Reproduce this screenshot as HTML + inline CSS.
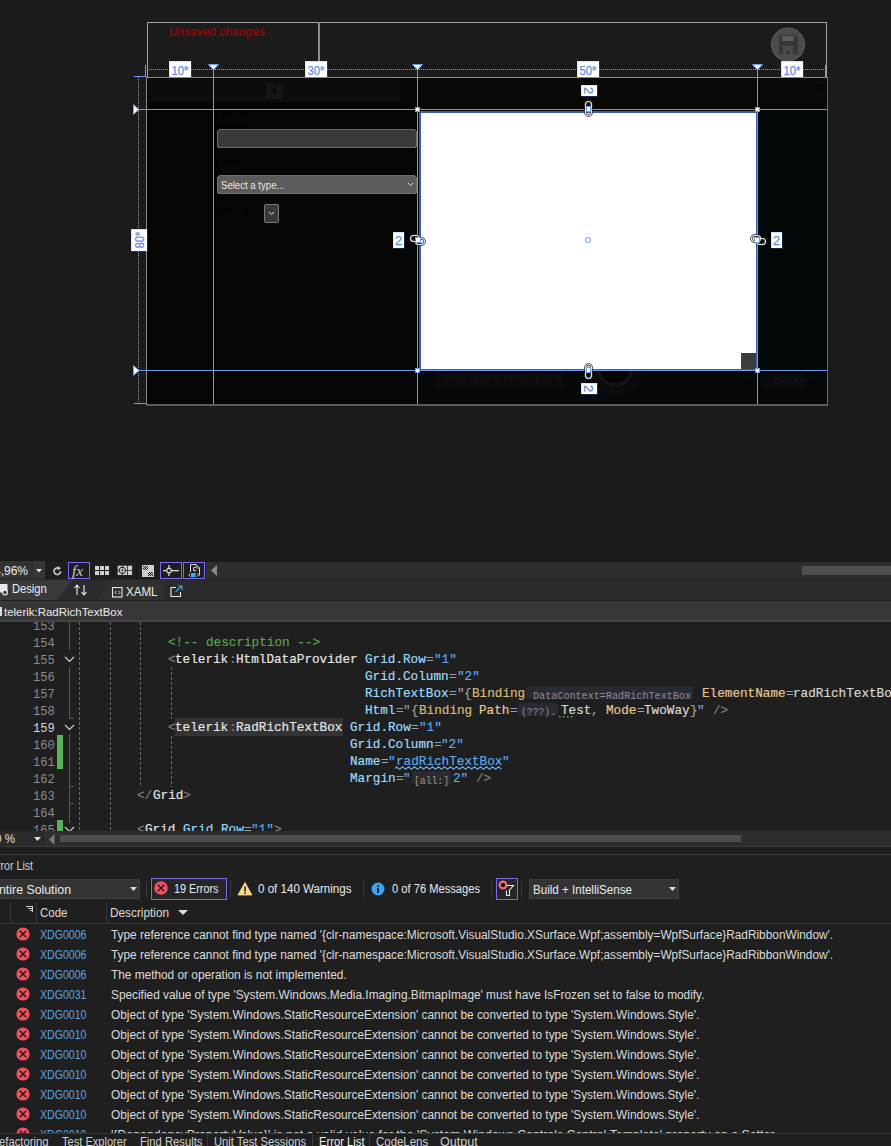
<!DOCTYPE html>
<html><head><meta charset="utf-8">
<style>
*{margin:0;padding:0;box-sizing:border-box}
html,body{width:891px;height:1146px;overflow:hidden;background:#1b1b1b;font-family:"Liberation Sans",sans-serif;position:relative}
.a{position:absolute}
.t{position:absolute;white-space:pre}
</style></head>
<body>
<svg class="a" style="left:0;top:0" width="891" height="420" font-family="Liberation Sans, sans-serif" shape-rendering="crispEdges">
  <defs>
    <radialGradient id="map1" cx="0.5" cy="0.5" r="0.6">
      <stop offset="0" stop-color="#0a0d10"/>
      <stop offset="1" stop-color="#050607"/>
    </radialGradient>
  </defs>
  <!-- header frame -->
  <rect x="147.5" y="22.5" width="679" height="56" fill="#1b1b1b" stroke="#a6a6a6" stroke-width="1"/>
  <rect x="318" y="22" width="2" height="40" fill="#8c8c8c"/>
  <text x="169" y="36" font-size="12" font-weight="bold" font-style="italic" fill="#850b0b" textLength="96" lengthAdjust="spacingAndGlyphs">Unsaved changes</text>
  <circle cx="788" cy="44.5" r="16.5" fill="#4b4b4b" stroke="#606060" stroke-width="1" shape-rendering="auto"/>
  <g fill="#373737">
    <path d="M779 35 h16 l3 3 v16 h-19 z"/>
  </g>
  <rect x="782" y="36" width="12" height="5" fill="#5a5a5a"/>
  <rect x="783" y="46" width="10" height="8" fill="#4b4b4b"/>
  <rect x="786" y="51" width="4" height="3" fill="#373737"/>
  <!-- content -->
  <rect x="146.5" y="77.5" width="681" height="327" fill="#050505" stroke="#8a8a8a" stroke-width="1"/>
  <rect x="827" y="78" width="1" height="327" fill="#6a6a6a"/>
  <rect x="146" y="404" width="682" height="2" fill="#5c5c5c"/>
  <rect x="400" y="78" width="427" height="326" fill="#02070a"/>
  <rect x="400" y="78" width="20" height="326" fill="#040506"/>
  <rect x="418" y="78" width="409" height="31" fill="#090807"/>
  <rect x="418" y="371" width="409" height="33" fill="#05080a"/>
  <rect x="436" y="373" width="128" height="15" rx="2" fill="#080a0c"/>
  <circle cx="615" cy="370" r="27" fill="#090a0b" shape-rendering="auto"/><circle cx="615" cy="368" r="17" fill="#030303" stroke="#111315" stroke-width="4" shape-rendering="auto"/><path d="M612 391 l3 3 l3 -3" fill="none" stroke="#181a1c" stroke-width="1"/>
  <rect x="765" y="373" width="40" height="15" rx="2" fill="#080a0c"/>
  <rect x="812" y="82" width="12" height="12" fill="none" stroke="#0e0e0e"/>
  <!-- app toolbar -->
  <rect x="148" y="79" width="252" height="23" rx="3" fill="#0c0c0c"/>
  <path d="M266 83 h7 l2 2 h8 v14 h-17 z" fill="#151515"/><path d="M271 91 h6 M274 88 v6" stroke="#080808" stroke-width="1.3"/>
  <!-- form labels -->
  <text x="218" y="124" font-size="11" fill="#0b0b0b">Name</text>
  <rect x="217.5" y="129.5" width="199" height="18" rx="3" fill="#3a3a3a" stroke="#6a6a6a"/>
  <text x="218" y="170" font-size="11" fill="#0b0b0b">Type</text>
  <rect x="217.5" y="175.5" width="199" height="18" rx="3" fill="#5b5b5b" stroke="#6f6f6f"/>
  <text x="221" y="189" font-size="10.8" fill="#e8e8e8" textLength="63.5" lengthAdjust="spacingAndGlyphs">Select a type...</text>
  <path d="M408 183 l2.5 2.5 l2.5 -2.5" fill="none" stroke="#ddd" stroke-width="1" shape-rendering="auto"/>
  <text x="218" y="217" font-size="11" fill="#0b0b0b">Color</text>
  <rect x="264.5" y="204.5" width="14" height="18" rx="2" fill="#3a3a3a" stroke="#7a7a7a"/>
  <path d="M269 212 l2.5 2.5 l2.5 -2.5" fill="none" stroke="#ddd" stroke-width="1" shape-rendering="auto"/>
  <!-- map text -->
  <text x="442" y="383" font-size="9" fill="#181818" textLength="120" lengthAdjust="spacingAndGlyphs">30° 00' 00,00" N 75° 00' 00,00" E</text>
  <text x="772" y="383" font-size="9" fill="#1a1a1a">2500 km</text>
  <!-- white rich text box -->
  <rect x="419" y="111" width="339" height="259" fill="#3a5fa8"/>
  <rect x="421" y="113" width="335" height="256" fill="#ffffff"/>
  <rect x="741" y="353" width="15" height="16" fill="#3c3c3c"/>
  <!-- guides -->
  <g fill="#6f9be8">
    <rect x="213" y="66" width="1" height="338"/>
    <rect x="417" y="66" width="1" height="338"/>
    <rect x="757" y="66" width="1" height="338"/>
    <rect x="139" y="109" width="688" height="1"/>
    <rect x="139" y="370" width="688" height="1"/>
  </g>
  <!-- dotted lines -->
  <line x1="147" y1="69.5" x2="826" y2="69.5" stroke="#6f9be8" stroke-width="1" stroke-dasharray="1 1"/>
  <line x1="138.5" y1="77" x2="138.5" y2="403" stroke="#6f9be8" stroke-width="1" stroke-dasharray="1 1"/>
  <!-- corner brackets -->
  <g fill="#6f9be8">
    <rect x="145" y="65" width="1" height="12"/>
    <rect x="134" y="76" width="12" height="1"/>
    <rect x="825" y="65" width="1" height="12"/>
    <rect x="134" y="403" width="12" height="1"/>
  </g>
  <!-- triangles -->
  <g fill="#ffffff" stroke="#6f9be8" stroke-width="1" shape-rendering="auto">
    <path d="M208.5 64.5 h10 l-5 5.5 z"/>
    <path d="M412.5 64.5 h10 l-5 5.5 z"/>
    <path d="M752.5 64.5 h10 l-5 5.5 z"/>
    <path d="M133.5 104.5 v10 l5.5 -5 z"/>
    <path d="M133.5 365.5 v10 l5.5 -5 z"/>
  </g>
  <!-- column labels -->
  <g font-size="13" fill="#5f8de6" stroke="#5f8de6" stroke-width="0.25" text-anchor="middle">
    <rect x="169" y="61" width="22" height="16" fill="#fff"/><text x="180" y="75" textLength="17" lengthAdjust="spacingAndGlyphs">10*</text>
    <rect x="305" y="61" width="22" height="16" fill="#fff"/><text x="316" y="75" textLength="17" lengthAdjust="spacingAndGlyphs">30*</text>
    <rect x="577" y="61" width="22" height="16" fill="#fff"/><text x="588" y="75" textLength="17" lengthAdjust="spacingAndGlyphs">50*</text>
    <rect x="781" y="61" width="22" height="16" fill="#fff"/><text x="792" y="75" textLength="17" lengthAdjust="spacingAndGlyphs">10*</text>
    <rect x="131" y="229" width="16" height="22" fill="#fff"/><text transform="translate(144 240) rotate(-90)" x="0" y="0" textLength="17" lengthAdjust="spacingAndGlyphs">80*</text>
    <rect x="393" y="232" width="11" height="16" fill="#fff"/><text x="398.5" y="245">2</text>
    <rect x="771" y="232" width="11" height="16" fill="#fff"/><text x="776.5" y="245">2</text>
    <rect x="581" y="85" width="16" height="11" fill="#fff"/><text transform="translate(584 90.5) rotate(90)" x="0" y="0">2</text>
    <rect x="581" y="383" width="16" height="11" fill="#fff"/><text transform="translate(584 388.5) rotate(90)" x="0" y="0">2</text>
  </g>
  <!-- handles -->
  <g fill="#ffffff" stroke="#6f9be8" stroke-width="1">
    <rect x="415.5" y="107.5" width="4" height="4"/>
    <rect x="755.5" y="107.5" width="4" height="4"/>
    <rect x="415.5" y="368.5" width="4" height="4"/>
    <rect x="755.5" y="368.5" width="4" height="4"/>
  </g>
  <circle cx="588" cy="240" r="2.5" fill="none" stroke="#6f9be8" stroke-width="1" shape-rendering="auto"/>
  <!-- chain links -->
  <g fill="none" shape-rendering="auto">
    <g stroke="#2a2a2a" stroke-width="2.6">
      <rect x="585.5" y="101.5" width="6" height="8" rx="3"/><rect x="585.5" y="107.5" width="6" height="8" rx="3"/>
      <rect x="585.5" y="364.5" width="6" height="8" rx="3"/><rect x="585.5" y="370.5" width="6" height="8" rx="3"/>
      <rect x="410.5" y="235.5" width="9" height="6" rx="3"/><rect x="415.5" y="238.5" width="9" height="6" rx="3"/>
      <rect x="751.5" y="235.5" width="9" height="6" rx="3"/><rect x="756.5" y="238.5" width="9" height="6" rx="3"/>
    </g>
    <g stroke="#e6e6e6" stroke-width="1.1">
      <rect x="585.5" y="101.5" width="6" height="8" rx="3"/><rect x="585.5" y="107.5" width="6" height="8" rx="3"/>
      <rect x="585.5" y="364.5" width="6" height="8" rx="3"/><rect x="585.5" y="370.5" width="6" height="8" rx="3"/>
      <rect x="410.5" y="235.5" width="9" height="6" rx="3"/><rect x="415.5" y="238.5" width="9" height="6" rx="3"/>
      <rect x="751.5" y="235.5" width="9" height="6" rx="3"/><rect x="756.5" y="238.5" width="9" height="6" rx="3"/>
    </g>
  </g>
  <g fill="#ffffff" stroke="#6f9be8" stroke-width="1">
    <rect x="586.5" y="106.5" width="4" height="5"/>
    <rect x="586.5" y="367.5" width="4" height="5"/>
    <rect x="415.5" y="237.5" width="5" height="5"/>
    <rect x="754.5" y="237.5" width="5" height="5"/>
  </g>
</svg>

<div class="a" style="left:0;top:562px;width:891px;height:17px;background:#2e2e2e"></div><div class="a" style="left:0;top:579px;width:891px;height:1px;background:#262626"></div><div class="a" style="left:0;top:561px;width:45px;height:18px;background:#333333"></div><div class="a" style="left:32px;top:561px;width:1px;height:18px;background:#2c2c2c"></div><div class="a" style="left:33px;top:561px;width:12px;height:18px;background:#363636;border-right:1px solid #3c3c3c"></div><div class="t" style="left:-6.00px;top:565.14px;font-size:12px;line-height:12px;font-family:'Liberation Sans',sans-serif;color:#eeeeee;transform:scaleX(0.9995);transform-origin:0 0;">4,96%</div>
<svg class="a" style="left:36px;top:569px" width="6" height="4"><path d="M0 0h6l-3 3.5z" fill="#e6e6e6"/></svg><div class="a" style="left:45px;top:562px;width:161px;height:17px;background:#1e1e1e"></div><div class="a" style="left:113px;top:563px;width:1px;height:15px;background:#161616"></div><div class="a" style="left:136px;top:563px;width:1px;height:15px;background:#161616"></div><svg class="a" style="left:50px;top:563px" width="14" height="16" viewBox="0 0 14 16">
<path d="M10.6 8.2 A3.3 3.3 0 1 1 8.6 5.2" fill="none" stroke="#c8c8c8" stroke-width="1.7"/>
<path d="M7.6 3 L11 5.3 L7.6 7.6 z" fill="#c8c8c8"/></svg><div class="a" style="left:68px;top:562px;width:22px;height:17px;border:1px solid #7b6cf0;background:#1e1e1e"></div><div class="t" style="left:72px;top:562px;font-family:'Liberation Serif',serif;font-style:italic;font-size:15.5px;line-height:17px;color:#c8c8c8">fx</div><svg class="a" style="left:95px;top:566px" width="15" height="9"><rect x="0" y="0" width="4" height="4" fill="#d0d0d0"/><rect x="5" y="0" width="4" height="4" fill="#d0d0d0"/><rect x="10" y="0" width="4" height="4" fill="#d0d0d0"/><rect x="0" y="5" width="4" height="4" fill="#d0d0d0"/><rect x="5" y="5" width="4" height="4" fill="#d0d0d0"/><rect x="10" y="5" width="4" height="4" fill="#d0d0d0"/></svg><svg class="a" style="left:117px;top:565px" width="16" height="11">
<rect x="0.7" y="0.7" width="4.3" height="4.3" fill="#cfcfcf"/><rect x="5.7" y="0.7" width="4.3" height="4.3" fill="#cfcfcf"/>
<rect x="0.7" y="5.7" width="4.3" height="4.3" fill="#cfcfcf"/><rect x="5.7" y="5.7" width="4.3" height="4.3" fill="#cfcfcf"/>
<rect x="10.8" y="0.7" width="4.3" height="4.3" fill="#cfcfcf"/><rect x="10.8" y="5.7" width="4.3" height="4.3" fill="#cfcfcf"/>
<circle cx="5.35" cy="5.35" r="3.2" fill="none" stroke="#1e1e1e" stroke-width="1"/>
<circle cx="5.35" cy="5.35" r="2" fill="#cfcfcf"/><circle cx="5.35" cy="5.35" r="1" fill="#1e1e1e"/></svg><svg class="a" style="left:142px;top:565px" width="12" height="12"><rect width="12" height="12" fill="#cdcdcd"/><rect x="1" y="1" width="1" height="1" fill="#1a1a1a"/><rect x="1" y="3" width="1" height="1" fill="#1a1a1a"/><rect x="2" y="2" width="1" height="1" fill="#1a1a1a"/><rect x="2" y="4" width="1" height="1" fill="#1a1a1a"/><rect x="6" y="8" width="1" height="1" fill="#1a1a1a"/><rect x="6" y="10" width="1" height="1" fill="#1a1a1a"/><rect x="3" y="1" width="1" height="1" fill="#1a1a1a"/><rect x="3" y="3" width="1" height="1" fill="#1a1a1a"/><rect x="7" y="7" width="1" height="1" fill="#1a1a1a"/><rect x="7" y="9" width="1" height="1" fill="#1a1a1a"/><rect x="4" y="2" width="1" height="1" fill="#1a1a1a"/><rect x="4" y="4" width="1" height="1" fill="#1a1a1a"/><rect x="8" y="8" width="1" height="1" fill="#1a1a1a"/><rect x="8" y="10" width="1" height="1" fill="#1a1a1a"/><rect x="5" y="1" width="1" height="1" fill="#1a1a1a"/><rect x="5" y="3" width="1" height="1" fill="#1a1a1a"/><rect x="9" y="7" width="1" height="1" fill="#1a1a1a"/><rect x="9" y="9" width="1" height="1" fill="#1a1a1a"/><rect x="10" y="8" width="1" height="1" fill="#1a1a1a"/><rect x="10" y="10" width="1" height="1" fill="#1a1a1a"/></svg><div class="a" style="left:160px;top:562px;width:22px;height:17px;border:1px solid #7b6cf0;background:#1e1e1e"></div><svg class="a" style="left:163px;top:565px" width="16" height="11">
<rect x="0" y="5" width="16" height="1.3" fill="#d8d8d8"/><rect x="5.3" y="0" width="1.3" height="11" fill="#d8d8d8"/>
<circle cx="6" cy="5.6" r="2.3" fill="#1e1e1e" stroke="#d8d8d8" stroke-width="1.2"/></svg><div class="a" style="left:183px;top:562px;width:22px;height:17px;border:1px solid #7b6cf0;background:#1e1e1e"></div><svg class="a" style="left:183px;top:562px" width="22" height="17">
<path d="M7.5 10 V2.5 H13 L16.5 6 V13.5" fill="none" stroke="#d8d8d8" stroke-width="1"/>
<path d="M13 2.5 V6 H16.5" fill="none" stroke="#d8d8d8" stroke-width="0.8"/>
<path d="M12.5 5.5 H10.5 V8.5 H12.5 M11.8 7.5 L12.8 8.5 L11.8 9.5" fill="none" stroke="#d8d8d8" stroke-width="0.9"/>
<path d="M7 11.5 L5.8 13 L7 14.5 M14.2 11.5 L15.4 13 L14.2 14.5" fill="none" stroke="#d8d8d8" stroke-width="0.9"/>
<rect x="8" y="11" width="4.5" height="4.3" fill="#3aaef0"/></svg><svg class="a" style="left:211px;top:565px" width="6" height="11"><path d="M6 0v11L0 5.5z" fill="#8a8a8a"/></svg><div class="a" style="left:802px;top:566px;width:89px;height:9px;background:#4f4f4f"></div><div class="a" style="left:0;top:580px;width:891px;height:21px;background:#2b2b2b"></div><svg class="a" style="left:0;top:580px" width="200" height="21"><path d="M0 0H73L55 21H0z" fill="#3a3a3a"/><path d="M112 0H164V21H97z" fill="#313131"/></svg><svg class="a" style="left:0;top:584px" width="9" height="12">
<rect x="-4" y="0.5" width="11" height="7.5" fill="#e8e8e8" stroke="#e8e8e8" stroke-width="1"/>
<circle cx="5" cy="8.5" r="2.4" fill="#3a3a3a" stroke="#e8e8e8" stroke-width="1.2"/></svg><div class="t" style="left:11.50px;top:583.42px;font-size:12.5px;line-height:12.5px;font-family:'Liberation Sans',sans-serif;color:#eeeeee;transform:scaleX(0.8941);transform-origin:0 0;">Design</div>
<svg class="a" style="left:74px;top:584px" width="13" height="12">
<path d="M3 11V1.5 M0.5 4 L3 1 L5.5 4" fill="none" stroke="#f0f0f0" stroke-width="1.1"/>
<path d="M10 1V10.5 M7.5 8 L10 11 L12.5 8" fill="none" stroke="#f0f0f0" stroke-width="1.1"/></svg><svg class="a" style="left:112px;top:587px" width="11" height="11">
<rect x="0.5" y="0.5" width="9.5" height="9.5" fill="none" stroke="#e8e8e8" stroke-width="1.1"/>
<path d="M4.3 4 L3 5.5 L4.3 7 M6.7 4 L8 5.5 L6.7 7" fill="none" stroke="#e8e8e8" stroke-width="0.9"/></svg><div class="t" style="left:126.00px;top:586.42px;font-size:12.5px;line-height:12.5px;font-family:'Liberation Sans',sans-serif;color:#eeeeee;transform:scaleX(0.9223);transform-origin:0 0;">XAML</div>
<svg class="a" style="left:170px;top:585px" width="14" height="13">
<path d="M6 2.5 H1 V11.5 H10.5 V7" fill="none" stroke="#e8e8e8" stroke-width="1.1"/>
<path d="M5.5 7 L11.5 1" fill="none" stroke="#3aa0e8" stroke-width="1.3"/><path d="M8 1 H12 V5" fill="none" stroke="#3aa0e8" stroke-width="1.2"/></svg><div class="a" style="left:0;top:600px;width:891px;height:1px;background:#222222"></div><div class="a" style="left:0;top:601px;width:891px;height:20px;background:#373737"></div><div class="a" style="left:0;top:620px;width:891px;height:2px;background:#444444"></div><div class="a" style="left:0;top:607px;width:2px;height:9px;background:#e0e0e0"></div><div class="t" style="left:4.00px;top:605.68px;font-size:11.6px;line-height:11.6px;font-family:'Liberation Sans',sans-serif;color:#eaeaea;transform:scaleX(0.9876);transform-origin:0 0;">telerik:RadRichTextBox</div>
<div class="a" style="left:0;top:622px;width:891px;height:209px;background:#1f1f1f;overflow:hidden"><div class="t" style="left:33.25px;top:-2.12px;font-size:13.6px;line-height:13.6px;font-family:'Liberation Mono',monospace;color:#8c8c8c;transform:scaleX(0.8950);transform-origin:0 0;">153</div>
<div class="t" style="left:33.25px;top:14.88px;font-size:13.6px;line-height:13.6px;font-family:'Liberation Mono',monospace;color:#8c8c8c;transform:scaleX(0.8950);transform-origin:0 0;">154</div>
<div class="t" style="left:33.25px;top:31.88px;font-size:13.6px;line-height:13.6px;font-family:'Liberation Mono',monospace;color:#8c8c8c;transform:scaleX(0.8950);transform-origin:0 0;">155</div>
<div class="t" style="left:33.25px;top:48.88px;font-size:13.6px;line-height:13.6px;font-family:'Liberation Mono',monospace;color:#8c8c8c;transform:scaleX(0.8950);transform-origin:0 0;">156</div>
<div class="t" style="left:33.25px;top:65.88px;font-size:13.6px;line-height:13.6px;font-family:'Liberation Mono',monospace;color:#8c8c8c;transform:scaleX(0.8950);transform-origin:0 0;">157</div>
<div class="t" style="left:33.25px;top:82.88px;font-size:13.6px;line-height:13.6px;font-family:'Liberation Mono',monospace;color:#8c8c8c;transform:scaleX(0.8950);transform-origin:0 0;">158</div>
<div class="t" style="left:33.25px;top:99.88px;font-size:13.6px;line-height:13.6px;font-family:'Liberation Mono',monospace;color:#d8d8d8;transform:scaleX(0.8950);transform-origin:0 0;">159</div>
<div class="t" style="left:33.25px;top:116.88px;font-size:13.6px;line-height:13.6px;font-family:'Liberation Mono',monospace;color:#8c8c8c;transform:scaleX(0.8950);transform-origin:0 0;">160</div>
<div class="t" style="left:33.25px;top:133.88px;font-size:13.6px;line-height:13.6px;font-family:'Liberation Mono',monospace;color:#8c8c8c;transform:scaleX(0.8950);transform-origin:0 0;">161</div>
<div class="t" style="left:33.25px;top:150.88px;font-size:13.6px;line-height:13.6px;font-family:'Liberation Mono',monospace;color:#8c8c8c;transform:scaleX(0.8950);transform-origin:0 0;">162</div>
<div class="t" style="left:33.25px;top:167.88px;font-size:13.6px;line-height:13.6px;font-family:'Liberation Mono',monospace;color:#8c8c8c;transform:scaleX(0.8950);transform-origin:0 0;">163</div>
<div class="t" style="left:33.25px;top:184.88px;font-size:13.6px;line-height:13.6px;font-family:'Liberation Mono',monospace;color:#8c8c8c;transform:scaleX(0.8950);transform-origin:0 0;">164</div>
<div class="t" style="left:33.25px;top:201.88px;font-size:13.6px;line-height:13.6px;font-family:'Liberation Mono',monospace;color:#8c8c8c;transform:scaleX(0.8950);transform-origin:0 0;">165</div>
<div class="a" style="left:57px;top:113.4px;width:6px;height:34px;background:#57b45a"></div><div class="a" style="left:57px;top:198.4px;width:6px;height:17px;background:#57b45a"></div><div class="a" style="left:69px;top:0.0px;width:1px;height:28.0px;background:#5a5a5a"></div><div class="a" style="left:69px;top:45.0px;width:1px;height:51.5px;background:#5a5a5a"></div><div class="a" style="left:69px;top:96px;width:5px;height:1px;background:#5a5a5a"></div><div class="a" style="left:69px;top:112.0px;width:1px;height:89.0px;background:#5a5a5a"></div><div class="a" style="left:69px;top:164px;width:5px;height:1px;background:#5a5a5a"></div><div class="a" style="left:69px;top:181px;width:5px;height:1px;background:#5a5a5a"></div><svg class="a" style="left:64px;top:34.0px" width="11" height="7"><path d="M1 1 L5.5 5.5 L10 1" fill="none" stroke="#cfcfcf" stroke-width="1.2"/></svg><svg class="a" style="left:64px;top:102.0px" width="11" height="7"><path d="M1 1 L5.5 5.5 L10 1" fill="none" stroke="#cfcfcf" stroke-width="1.2"/></svg><svg class="a" style="left:64px;top:203.5px" width="11" height="7"><path d="M1 1 L5.5 5.5 L10 1" fill="none" stroke="#cfcfcf" stroke-width="1.2"/></svg><div class="a" style="left:79px;top:0.0px;width:1px;height:209.0px;background:repeating-linear-gradient(#6a6a6a 0 3px,transparent 3px 5px)"></div><div class="a" style="left:110px;top:0.0px;width:1px;height:209.0px;background:repeating-linear-gradient(#6a6a6a 0 3px,transparent 3px 5px)"></div><div class="a" style="left:140px;top:0.0px;width:1px;height:164.5px;background:repeating-linear-gradient(#6a6a6a 0 3px,transparent 3px 5px)"></div><div class="a" style="left:171px;top:45.0px;width:1px;height:51.5px;background:repeating-linear-gradient(#6a6a6a 0 3px,transparent 3px 5px)"></div><div class="a" style="left:171px;top:114.0px;width:1px;height:50.5px;background:repeating-linear-gradient(#6a6a6a 0 3px,transparent 3px 5px)"></div><div class="a" style="left:175px;top:96px;width:168px;height:18px;background:#333333"></div><div class="a" style="left:526px;top:64px;width:167px;height:13px;background:#2a2a34;border-radius:2px"></div><div class="t" style="left:533.00px;top:68.83px;font-size:10.4px;line-height:10.4px;font-family:'Liberation Mono',monospace;color:#8e8e8e;transform:scaleX(0.9747);transform-origin:0 0;">DataContext=RadRichTextBox</div>
<div class="a" style="left:518px;top:80.7px;width:40px;height:13px;background:#2a2a34;border-radius:2px"></div><div class="t" style="left:521.00px;top:85.33px;font-size:10.4px;line-height:10.4px;font-family:'Liberation Mono',monospace;color:#8e8e8e;transform:scaleX(0.9357);transform-origin:0 0;">(???).</div>
<div class="a" style="left:412px;top:149.4px;width:39px;height:13px;background:#2a2a34;border-radius:2px"></div><div class="t" style="left:414.00px;top:153.83px;font-size:10.4px;line-height:10.4px;font-family:'Liberation Mono',monospace;color:#a39478;transform:scaleX(0.9357);transform-origin:0 0;">[all:]</div>
<div class="t" style="left:167.70px;top:13.88px;font-size:13.6px;line-height:13.6px;font-family:'Liberation Mono',monospace;color:#57a64a;transform:scaleX(0.9318);transform-origin:0 0;-webkit-text-stroke:0.2px #57a64a;">&lt;!-- description --&gt;</div>
<div class="t" style="left:167.70px;top:30.88px;font-size:13.6px;line-height:13.6px;font-family:'Liberation Mono',monospace;color:#808080;transform:scaleX(0.9318);transform-origin:0 0;-webkit-text-stroke:0.2px #808080;">&lt;</div>
<div class="t" style="left:175.30px;top:30.88px;font-size:13.6px;line-height:13.6px;font-family:'Liberation Mono',monospace;color:#e6e6e6;transform:scaleX(0.9318);transform-origin:0 0;-webkit-text-stroke:0.2px #e6e6e6;">telerik</div>
<div class="t" style="left:228.50px;top:30.88px;font-size:13.6px;line-height:13.6px;font-family:'Liberation Mono',monospace;color:#808080;transform:scaleX(0.9318);transform-origin:0 0;-webkit-text-stroke:0.2px #808080;">:</div>
<div class="t" style="left:236.10px;top:30.88px;font-size:13.6px;line-height:13.6px;font-family:'Liberation Mono',monospace;color:#e6e6e6;transform:scaleX(0.9318);transform-origin:0 0;-webkit-text-stroke:0.2px #e6e6e6;">HtmlDataProvider</div>
<div class="t" style="left:357.70px;top:30.88px;font-size:13.6px;line-height:13.6px;font-family:'Liberation Mono',monospace;color:#e6e6e6;transform:scaleX(0.9318);transform-origin:0 0;-webkit-text-stroke:0.2px #e6e6e6;"> </div>
<div class="t" style="left:365.30px;top:30.88px;font-size:13.6px;line-height:13.6px;font-family:'Liberation Mono',monospace;color:#9cdcfe;transform:scaleX(0.9318);transform-origin:0 0;-webkit-text-stroke:0.2px #9cdcfe;">Grid.Row</div>
<div class="t" style="left:426.10px;top:30.88px;font-size:13.6px;line-height:13.6px;font-family:'Liberation Mono',monospace;color:#a0a0a0;transform:scaleX(0.9318);transform-origin:0 0;-webkit-text-stroke:0.2px #a0a0a0;">=</div>
<div class="t" style="left:433.70px;top:30.88px;font-size:13.6px;line-height:13.6px;font-family:'Liberation Mono',monospace;color:#5caaf0;transform:scaleX(0.9318);transform-origin:0 0;-webkit-text-stroke:0.2px #5caaf0;">&quot;1&quot;</div>
<div class="t" style="left:365.30px;top:47.88px;font-size:13.6px;line-height:13.6px;font-family:'Liberation Mono',monospace;color:#9cdcfe;transform:scaleX(0.9318);transform-origin:0 0;-webkit-text-stroke:0.2px #9cdcfe;">Grid.Column</div>
<div class="t" style="left:448.90px;top:47.88px;font-size:13.6px;line-height:13.6px;font-family:'Liberation Mono',monospace;color:#a0a0a0;transform:scaleX(0.9318);transform-origin:0 0;-webkit-text-stroke:0.2px #a0a0a0;">=</div>
<div class="t" style="left:456.50px;top:47.88px;font-size:13.6px;line-height:13.6px;font-family:'Liberation Mono',monospace;color:#5caaf0;transform:scaleX(0.9318);transform-origin:0 0;-webkit-text-stroke:0.2px #5caaf0;">&quot;2&quot;</div>
<div class="t" style="left:365.30px;top:64.88px;font-size:13.6px;line-height:13.6px;font-family:'Liberation Mono',monospace;color:#9cdcfe;transform:scaleX(0.9318);transform-origin:0 0;-webkit-text-stroke:0.2px #9cdcfe;">RichTextBox</div>
<div class="t" style="left:448.90px;top:64.88px;font-size:13.6px;line-height:13.6px;font-family:'Liberation Mono',monospace;color:#a0a0a0;transform:scaleX(0.9318);transform-origin:0 0;-webkit-text-stroke:0.2px #a0a0a0;">=</div>
<div class="t" style="left:456.50px;top:64.88px;font-size:13.6px;line-height:13.6px;font-family:'Liberation Mono',monospace;color:#a0a0a0;transform:scaleX(0.9318);transform-origin:0 0;-webkit-text-stroke:0.2px #a0a0a0;">&quot;</div>
<div class="t" style="left:464.10px;top:64.88px;font-size:13.6px;line-height:13.6px;font-family:'Liberation Mono',monospace;color:#a0a0a0;transform:scaleX(0.9318);transform-origin:0 0;-webkit-text-stroke:0.2px #a0a0a0;">{</div>
<div class="t" style="left:471.70px;top:64.88px;font-size:13.6px;line-height:13.6px;font-family:'Liberation Mono',monospace;color:#d7ba7d;transform:scaleX(0.9318);transform-origin:0 0;-webkit-text-stroke:0.2px #d7ba7d;">Binding</div>
<div class="t" style="left:702.00px;top:64.88px;font-size:13.6px;line-height:13.6px;font-family:'Liberation Mono',monospace;color:#e8c68e;transform:scaleX(0.9318);transform-origin:0 0;-webkit-text-stroke:0.2px;">ElementName</div>
<div class="t" style="left:785.60px;top:64.88px;font-size:13.6px;line-height:13.6px;font-family:'Liberation Mono',monospace;color:#a0a0a0;transform:scaleX(0.9318);transform-origin:0 0;-webkit-text-stroke:0.2px;">=</div>
<div class="t" style="left:793.20px;top:64.88px;font-size:13.6px;line-height:13.6px;font-family:'Liberation Mono',monospace;color:#d8d8d8;transform:scaleX(0.9318);transform-origin:0 0;-webkit-text-stroke:0.2px;">radRichTextBox</div>
<div class="t" style="left:365.30px;top:81.88px;font-size:13.6px;line-height:13.6px;font-family:'Liberation Mono',monospace;color:#9cdcfe;transform:scaleX(0.9318);transform-origin:0 0;-webkit-text-stroke:0.2px #9cdcfe;">Html</div>
<div class="t" style="left:395.70px;top:81.88px;font-size:13.6px;line-height:13.6px;font-family:'Liberation Mono',monospace;color:#a0a0a0;transform:scaleX(0.9318);transform-origin:0 0;-webkit-text-stroke:0.2px #a0a0a0;">=</div>
<div class="t" style="left:403.30px;top:81.88px;font-size:13.6px;line-height:13.6px;font-family:'Liberation Mono',monospace;color:#a0a0a0;transform:scaleX(0.9318);transform-origin:0 0;-webkit-text-stroke:0.2px #a0a0a0;">&quot;</div>
<div class="t" style="left:410.90px;top:81.88px;font-size:13.6px;line-height:13.6px;font-family:'Liberation Mono',monospace;color:#a0a0a0;transform:scaleX(0.9318);transform-origin:0 0;-webkit-text-stroke:0.2px #a0a0a0;">{</div>
<div class="t" style="left:418.50px;top:81.88px;font-size:13.6px;line-height:13.6px;font-family:'Liberation Mono',monospace;color:#d7ba7d;transform:scaleX(0.9318);transform-origin:0 0;-webkit-text-stroke:0.2px #d7ba7d;">Binding</div>
<div class="t" style="left:471.70px;top:81.88px;font-size:13.6px;line-height:13.6px;font-family:'Liberation Mono',monospace;color:#a0a0a0;transform:scaleX(0.9318);transform-origin:0 0;-webkit-text-stroke:0.2px #a0a0a0;"> </div>
<div class="t" style="left:479.30px;top:81.88px;font-size:13.6px;line-height:13.6px;font-family:'Liberation Mono',monospace;color:#e8c68e;transform:scaleX(0.9318);transform-origin:0 0;-webkit-text-stroke:0.2px #e8c68e;">Path</div>
<div class="t" style="left:509.70px;top:81.88px;font-size:13.6px;line-height:13.6px;font-family:'Liberation Mono',monospace;color:#a0a0a0;transform:scaleX(0.9318);transform-origin:0 0;-webkit-text-stroke:0.2px #a0a0a0;">=</div>
<div class="t" style="left:560.50px;top:81.88px;font-size:13.6px;line-height:13.6px;font-family:'Liberation Mono',monospace;color:#d8d8d8;transform:scaleX(0.9318);transform-origin:0 0;-webkit-text-stroke:0.2px #d8d8d8;">Test</div>
<div class="t" style="left:590.90px;top:81.88px;font-size:13.6px;line-height:13.6px;font-family:'Liberation Mono',monospace;color:#a0a0a0;transform:scaleX(0.9318);transform-origin:0 0;-webkit-text-stroke:0.2px #a0a0a0;">,</div>
<div class="t" style="left:598.50px;top:81.88px;font-size:13.6px;line-height:13.6px;font-family:'Liberation Mono',monospace;color:#a0a0a0;transform:scaleX(0.9318);transform-origin:0 0;-webkit-text-stroke:0.2px #a0a0a0;"> </div>
<div class="t" style="left:606.10px;top:81.88px;font-size:13.6px;line-height:13.6px;font-family:'Liberation Mono',monospace;color:#e8c68e;transform:scaleX(0.9318);transform-origin:0 0;-webkit-text-stroke:0.2px #e8c68e;">Mode</div>
<div class="t" style="left:636.50px;top:81.88px;font-size:13.6px;line-height:13.6px;font-family:'Liberation Mono',monospace;color:#a0a0a0;transform:scaleX(0.9318);transform-origin:0 0;-webkit-text-stroke:0.2px #a0a0a0;">=</div>
<div class="t" style="left:644.10px;top:81.88px;font-size:13.6px;line-height:13.6px;font-family:'Liberation Mono',monospace;color:#d8d8d8;transform:scaleX(0.9318);transform-origin:0 0;-webkit-text-stroke:0.2px #d8d8d8;">TwoWay</div>
<div class="t" style="left:689.70px;top:81.88px;font-size:13.6px;line-height:13.6px;font-family:'Liberation Mono',monospace;color:#a0a0a0;transform:scaleX(0.9318);transform-origin:0 0;-webkit-text-stroke:0.2px #a0a0a0;">}</div>
<div class="t" style="left:697.30px;top:81.88px;font-size:13.6px;line-height:13.6px;font-family:'Liberation Mono',monospace;color:#5caaf0;transform:scaleX(0.9318);transform-origin:0 0;-webkit-text-stroke:0.2px #5caaf0;">&quot;</div>
<div class="t" style="left:704.90px;top:81.88px;font-size:13.6px;line-height:13.6px;font-family:'Liberation Mono',monospace;color:#a0a0a0;transform:scaleX(0.9318);transform-origin:0 0;-webkit-text-stroke:0.2px #a0a0a0;"> </div>
<div class="t" style="left:712.50px;top:81.88px;font-size:13.6px;line-height:13.6px;font-family:'Liberation Mono',monospace;color:#808080;transform:scaleX(0.9318);transform-origin:0 0;-webkit-text-stroke:0.2px #808080;">/&gt;</div>
<svg class="a" style="left:559px;top:94px" width="15" height="3"><g fill="#3fbf3f"><rect x="0" y="0" width="1.5" height="1.5"/><rect x="4" y="0" width="1.5" height="1.5"/><rect x="8" y="0" width="1.5" height="1.5"/><rect x="12" y="0" width="1.5" height="1.5"/></g></svg><div class="t" style="left:167.70px;top:98.88px;font-size:13.6px;line-height:13.6px;font-family:'Liberation Mono',monospace;color:#808080;transform:scaleX(0.9318);transform-origin:0 0;-webkit-text-stroke:0.2px #808080;">&lt;</div>
<div class="t" style="left:175.30px;top:98.88px;font-size:13.6px;line-height:13.6px;font-family:'Liberation Mono',monospace;color:#e6e6e6;transform:scaleX(0.9318);transform-origin:0 0;-webkit-text-stroke:0.2px #e6e6e6;">telerik</div>
<div class="t" style="left:228.50px;top:98.88px;font-size:13.6px;line-height:13.6px;font-family:'Liberation Mono',monospace;color:#808080;transform:scaleX(0.9318);transform-origin:0 0;-webkit-text-stroke:0.2px #808080;">:</div>
<div class="t" style="left:236.10px;top:98.88px;font-size:13.6px;line-height:13.6px;font-family:'Liberation Mono',monospace;color:#e6e6e6;transform:scaleX(0.9318);transform-origin:0 0;-webkit-text-stroke:0.2px #e6e6e6;">RadRichTextBox</div>
<div class="t" style="left:342.50px;top:98.88px;font-size:13.6px;line-height:13.6px;font-family:'Liberation Mono',monospace;color:#e6e6e6;transform:scaleX(0.9318);transform-origin:0 0;-webkit-text-stroke:0.2px #e6e6e6;"> </div>
<div class="t" style="left:350.10px;top:98.88px;font-size:13.6px;line-height:13.6px;font-family:'Liberation Mono',monospace;color:#9cdcfe;transform:scaleX(0.9318);transform-origin:0 0;-webkit-text-stroke:0.2px #9cdcfe;">Grid.Row</div>
<div class="t" style="left:410.90px;top:98.88px;font-size:13.6px;line-height:13.6px;font-family:'Liberation Mono',monospace;color:#a0a0a0;transform:scaleX(0.9318);transform-origin:0 0;-webkit-text-stroke:0.2px #a0a0a0;">=</div>
<div class="t" style="left:418.50px;top:98.88px;font-size:13.6px;line-height:13.6px;font-family:'Liberation Mono',monospace;color:#5caaf0;transform:scaleX(0.9318);transform-origin:0 0;-webkit-text-stroke:0.2px #5caaf0;">&quot;1&quot;</div>
<div class="t" style="left:350.10px;top:115.88px;font-size:13.6px;line-height:13.6px;font-family:'Liberation Mono',monospace;color:#9cdcfe;transform:scaleX(0.9318);transform-origin:0 0;-webkit-text-stroke:0.2px #9cdcfe;">Grid.Column</div>
<div class="t" style="left:433.70px;top:115.88px;font-size:13.6px;line-height:13.6px;font-family:'Liberation Mono',monospace;color:#a0a0a0;transform:scaleX(0.9318);transform-origin:0 0;-webkit-text-stroke:0.2px #a0a0a0;">=</div>
<div class="t" style="left:441.30px;top:115.88px;font-size:13.6px;line-height:13.6px;font-family:'Liberation Mono',monospace;color:#5caaf0;transform:scaleX(0.9318);transform-origin:0 0;-webkit-text-stroke:0.2px #5caaf0;">&quot;2&quot;</div>
<div class="t" style="left:350.10px;top:132.88px;font-size:13.6px;line-height:13.6px;font-family:'Liberation Mono',monospace;color:#9cdcfe;transform:scaleX(0.9318);transform-origin:0 0;-webkit-text-stroke:0.2px #9cdcfe;">Name</div>
<div class="t" style="left:380.50px;top:132.88px;font-size:13.6px;line-height:13.6px;font-family:'Liberation Mono',monospace;color:#a0a0a0;transform:scaleX(0.9318);transform-origin:0 0;-webkit-text-stroke:0.2px #a0a0a0;">=</div>
<div class="t" style="left:388.10px;top:132.88px;font-size:13.6px;line-height:13.6px;font-family:'Liberation Mono',monospace;color:#5caaf0;transform:scaleX(0.9318);transform-origin:0 0;-webkit-text-stroke:0.2px #5caaf0;">&quot;</div>
<div class="t" style="left:395.70px;top:132.88px;font-size:13.6px;line-height:13.6px;font-family:'Liberation Mono',monospace;color:#5caaf0;transform:scaleX(0.9318);transform-origin:0 0;-webkit-text-stroke:0.2px #5caaf0;">radRichTextBox</div>
<div class="t" style="left:502.10px;top:132.88px;font-size:13.6px;line-height:13.6px;font-family:'Liberation Mono',monospace;color:#5caaf0;transform:scaleX(0.9318);transform-origin:0 0;-webkit-text-stroke:0.2px #5caaf0;">&quot;</div>
<svg class="a" style="left:395px;top:143.5px" width="108" height="4"><path d="M0 3 L1.5 0.8 L4.5 3.2 L7.5 0.8 L10.5 3.2 L13.5 0.8 L16.5 3.2 L19.5 0.8 L22.5 3.2 L25.5 0.8 L28.5 3.2 L31.5 0.8 L34.5 3.2 L37.5 0.8 L40.5 3.2 L43.5 0.8 L46.5 3.2 L49.5 0.8 L52.5 3.2 L55.5 0.8 L58.5 3.2 L61.5 0.8 L64.5 3.2 L67.5 0.8 L70.5 3.2 L73.5 0.8 L76.5 3.2 L79.5 0.8 L82.5 3.2 L85.5 0.8 L88.5 3.2 L91.5 0.8 L94.5 3.2 L97.5 0.8 L100.5 3.2 L103.5 0.8 L106.5 3.2" fill="none" stroke="#7aa4cc" stroke-width="1.1"/></svg><div class="t" style="left:350.10px;top:149.88px;font-size:13.6px;line-height:13.6px;font-family:'Liberation Mono',monospace;color:#9cdcfe;transform:scaleX(0.9318);transform-origin:0 0;-webkit-text-stroke:0.2px #9cdcfe;">Margin</div>
<div class="t" style="left:395.70px;top:149.88px;font-size:13.6px;line-height:13.6px;font-family:'Liberation Mono',monospace;color:#a0a0a0;transform:scaleX(0.9318);transform-origin:0 0;-webkit-text-stroke:0.2px #a0a0a0;">=</div>
<div class="t" style="left:403.30px;top:149.88px;font-size:13.6px;line-height:13.6px;font-family:'Liberation Mono',monospace;color:#5caaf0;transform:scaleX(0.9318);transform-origin:0 0;-webkit-text-stroke:0.2px #5caaf0;">&quot;</div>
<div class="t" style="left:453.00px;top:149.88px;font-size:13.6px;line-height:13.6px;font-family:'Liberation Mono',monospace;color:#5caaf0;transform:scaleX(0.9318);transform-origin:0 0;-webkit-text-stroke:0.2px #5caaf0;">2&quot;</div>
<div class="t" style="left:468.20px;top:149.88px;font-size:13.6px;line-height:13.6px;font-family:'Liberation Mono',monospace;color:#a0a0a0;transform:scaleX(0.9318);transform-origin:0 0;-webkit-text-stroke:0.2px #a0a0a0;"> </div>
<div class="t" style="left:475.80px;top:149.88px;font-size:13.6px;line-height:13.6px;font-family:'Liberation Mono',monospace;color:#808080;transform:scaleX(0.9318);transform-origin:0 0;-webkit-text-stroke:0.2px #808080;">/&gt;</div>
<div class="t" style="left:137.30px;top:166.88px;font-size:13.6px;line-height:13.6px;font-family:'Liberation Mono',monospace;color:#808080;transform:scaleX(0.9318);transform-origin:0 0;-webkit-text-stroke:0.2px #808080;">&lt;/</div>
<div class="t" style="left:152.50px;top:166.88px;font-size:13.6px;line-height:13.6px;font-family:'Liberation Mono',monospace;color:#e6e6e6;transform:scaleX(0.9318);transform-origin:0 0;-webkit-text-stroke:0.2px #e6e6e6;">Grid</div>
<div class="t" style="left:182.90px;top:166.88px;font-size:13.6px;line-height:13.6px;font-family:'Liberation Mono',monospace;color:#808080;transform:scaleX(0.9318);transform-origin:0 0;-webkit-text-stroke:0.2px #808080;">&gt;</div>
<div class="t" style="left:137.30px;top:200.88px;font-size:13.6px;line-height:13.6px;font-family:'Liberation Mono',monospace;color:#808080;transform:scaleX(0.9318);transform-origin:0 0;-webkit-text-stroke:0.2px #808080;">&lt;</div>
<div class="t" style="left:144.90px;top:200.88px;font-size:13.6px;line-height:13.6px;font-family:'Liberation Mono',monospace;color:#e6e6e6;transform:scaleX(0.9318);transform-origin:0 0;-webkit-text-stroke:0.2px #e6e6e6;">Grid</div>
<div class="t" style="left:175.30px;top:200.88px;font-size:13.6px;line-height:13.6px;font-family:'Liberation Mono',monospace;color:#e6e6e6;transform:scaleX(0.9318);transform-origin:0 0;-webkit-text-stroke:0.2px #e6e6e6;"> </div>
<div class="t" style="left:182.90px;top:200.88px;font-size:13.6px;line-height:13.6px;font-family:'Liberation Mono',monospace;color:#9cdcfe;transform:scaleX(0.9318);transform-origin:0 0;-webkit-text-stroke:0.2px #9cdcfe;">Grid.Row</div>
<div class="t" style="left:243.70px;top:200.88px;font-size:13.6px;line-height:13.6px;font-family:'Liberation Mono',monospace;color:#a0a0a0;transform:scaleX(0.9318);transform-origin:0 0;-webkit-text-stroke:0.2px #a0a0a0;">=</div>
<div class="t" style="left:251.30px;top:200.88px;font-size:13.6px;line-height:13.6px;font-family:'Liberation Mono',monospace;color:#5caaf0;transform:scaleX(0.9318);transform-origin:0 0;-webkit-text-stroke:0.2px #5caaf0;">&quot;1&quot;</div>
<div class="t" style="left:274.10px;top:200.88px;font-size:13.6px;line-height:13.6px;font-family:'Liberation Mono',monospace;color:#808080;transform:scaleX(0.9318);transform-origin:0 0;-webkit-text-stroke:0.2px #808080;">&gt;</div>
</div><div class="a" style="left:0;top:831px;width:891px;height:15px;background:#2e2e2e"></div><div class="a" style="left:0;top:831px;width:43px;height:15px;background:#2a2a2a"></div><div class="a" style="left:43px;top:831px;width:1px;height:15px;background:#232323"></div><div class="t" style="left:-5.00px;top:832.84px;font-size:12px;line-height:12px;font-family:'Liberation Sans',sans-serif;color:#e0e0e0;transform:scaleX(0.9675);transform-origin:0 0;">0 %</div>
<svg class="a" style="left:34px;top:837px" width="7" height="4"><path d="M0 0h7l-3.5 4z" fill="#ddd"/></svg><svg class="a" style="left:49px;top:834px" width="6" height="11"><path d="M5.5 0v11L0 5.5z" fill="#7a7a7a"/></svg><div class="a" style="left:60px;top:835px;width:681px;height:7px;background:#4d4d4d"></div><div class="a" style="left:0;top:846px;width:891px;height:1px;background:#3c3c3c"></div><div class="a" style="left:0;top:847px;width:891px;height:7px;background:#1f1f1f"></div><div class="a" style="left:0;top:854px;width:891px;height:1px;background:#3a3a3a"></div><div class="a" style="left:0;top:855px;width:891px;height:291px;background:#1f1f1f"></div><div class="t" style="left:-3.00px;top:860.34px;font-size:12px;line-height:12px;font-family:'Liberation Sans',sans-serif;color:#cfcfcf;transform:scaleX(0.8851);transform-origin:0 0;">rror List</div>
<div class="a" style="left:0;top:879px;width:140px;height:20px;background:#333333;border:1px solid #3d3d3d;border-left:none"></div><div class="t" style="left:-1.00px;top:884.42px;font-size:12.5px;line-height:12.5px;font-family:'Liberation Sans',sans-serif;color:#eaeaea;transform:scaleX(0.9867);transform-origin:0 0;">ntire Solution</div>
<svg class="a" style="left:130px;top:887px" width="7" height="4"><path d="M0 0h7l-3.5 4z" fill="#ddd"/></svg><div class="a" style="left:146px;top:881px;width:1px;height:16px;background:#3a3a3a"></div><div class="a" style="left:151px;top:878px;width:76px;height:22px;border:1px solid #7b6ce6;background:#262626"></div><svg class="a" style="left:153.4px;top:880.4px" width="16" height="16"><circle cx="8" cy="8" r="6.8" fill="#f0525d"/><path d="M4.8 4.8 L11.2 11.2 M11.2 4.8 L4.8 11.2" stroke="#161616" stroke-width="1.3"/></svg><div class="t" style="left:174.40px;top:883.22px;font-size:12.5px;line-height:12.5px;font-family:'Liberation Sans',sans-serif;color:#eaeaea;transform:scaleX(0.8640);transform-origin:0 0;">19 Errors</div>
<div class="a" style="left:230px;top:881px;width:1px;height:16px;background:#3a3a3a"></div><svg class="a" style="left:237px;top:881px" width="16" height="15"><path d="M8 1.5 L15 14 H1 Z" fill="#f9d98a" stroke="#f9d98a" stroke-width="0.8" stroke-linejoin="round"/><rect x="7.3" y="5.5" width="1.5" height="5" fill="#111"/><rect x="7.3" y="11.5" width="1.5" height="1.5" fill="#111"/></svg><div class="t" style="left:258.00px;top:883.22px;font-size:12.5px;line-height:12.5px;font-family:'Liberation Sans',sans-serif;color:#eaeaea;transform:scaleX(0.9260);transform-origin:0 0;">0 of 140 Warnings</div>
<div class="a" style="left:363px;top:881px;width:1px;height:16px;background:#3a3a3a"></div><svg class="a" style="left:371px;top:882px" width="14" height="14"><circle cx="7" cy="7" r="6.5" fill="#3ba4f2"/><rect x="6.2" y="6" width="1.7" height="5" fill="#1c1c1c"/><rect x="6.2" y="3.2" width="1.7" height="1.7" fill="#1c1c1c"/></svg><div class="t" style="left:391.50px;top:883.22px;font-size:12.5px;line-height:12.5px;font-family:'Liberation Sans',sans-serif;color:#eaeaea;transform:scaleX(0.8920);transform-origin:0 0;">0 of 76 Messages</div>
<div class="a" style="left:491px;top:881px;width:1px;height:16px;background:#3a3a3a"></div><div class="a" style="left:496px;top:878px;width:22px;height:22px;border:1px solid #7b6ce6;background:#262626"></div><svg class="a" style="left:497px;top:879px" width="20" height="20">
<path d="M8.5 6.5 H16.5 L12.5 11 V16.5 H9.5 V11.5" fill="none" stroke="#e8e8e8" stroke-width="1.1"/>
<circle cx="6" cy="6" r="3.4" fill="#1e1e1e" stroke="#f06a78" stroke-width="2.2"/>
<circle cx="6" cy="6" r="1.2" fill="#111"/></svg><div class="a" style="left:521px;top:881px;width:1px;height:16px;background:#3a3a3a"></div><div class="a" style="left:529px;top:879px;width:150px;height:20px;background:#333333;border:1px solid #3d3d3d"></div><div class="t" style="left:533.00px;top:884.22px;font-size:12.5px;line-height:12.5px;font-family:'Liberation Sans',sans-serif;color:#eaeaea;transform:scaleX(0.9279);transform-origin:0 0;">Build + IntelliSense</div>
<svg class="a" style="left:669px;top:887px" width="7" height="4"><path d="M0 0h7l-3.5 4z" fill="#ddd"/></svg><div class="a" style="left:0;top:923px;width:891px;height:1px;background:#3a3a3a"></div><div class="a" style="left:10px;top:903px;width:1px;height:20px;background:#3a3a3a"></div><div class="a" style="left:36px;top:903px;width:1px;height:20px;background:#3a3a3a"></div><div class="a" style="left:106px;top:903px;width:1px;height:20px;background:#3a3a3a"></div><svg class="a" style="left:26px;top:906px" width="7" height="6"><g fill="#cfcfcf"><rect x="0" y="0" width="7" height="1"/><rect x="2" y="2" width="5" height="1"/><rect x="4" y="4" width="3" height="1"/><rect x="6" y="0" width="1" height="6"/></g></svg><div class="t" style="left:40.40px;top:907.42px;font-size:12.5px;line-height:12.5px;font-family:'Liberation Sans',sans-serif;color:#dcdcdc;transform:scaleX(0.9167);transform-origin:0 0;">Code</div>
<div class="t" style="left:110.40px;top:907.42px;font-size:12.5px;line-height:12.5px;font-family:'Liberation Sans',sans-serif;color:#dcdcdc;transform:scaleX(0.9451);transform-origin:0 0;">Description</div>
<svg class="a" style="left:178px;top:910px" width="10" height="5"><path d="M0 0h10l-5 5z" fill="#dcdcdc"/></svg><svg class="a" style="left:15.2px;top:925.5px" width="16" height="16"><circle cx="8" cy="8" r="6.6" fill="#f0525d"/><path d="M4.8 4.8 L11.2 11.2 M11.2 4.8 L4.8 11.2" stroke="#161616" stroke-width="1.3"/></svg><div class="t" style="left:40.00px;top:928.52px;font-size:12.5px;line-height:12.5px;font-family:'Liberation Sans',sans-serif;color:#58a6e4;transform:scaleX(0.8451);transform-origin:0 0;">XDG0006</div>
<div class="t" style="left:110.80px;top:928.94px;font-size:12px;line-height:12px;font-family:'Liberation Sans',sans-serif;color:#dcdcdc;transform:scaleX(0.9869);transform-origin:0 0;">Type reference cannot find type named &#x27;{clr-namespace:Microsoft.VisualStudio.XSurface.Wpf;assembly=WpfSurface}RadRibbonWindow&#x27;.</div>
<svg class="a" style="left:15.2px;top:945.5px" width="16" height="16"><circle cx="8" cy="8" r="6.6" fill="#f0525d"/><path d="M4.8 4.8 L11.2 11.2 M11.2 4.8 L4.8 11.2" stroke="#161616" stroke-width="1.3"/></svg><div class="t" style="left:40.00px;top:948.52px;font-size:12.5px;line-height:12.5px;font-family:'Liberation Sans',sans-serif;color:#58a6e4;transform:scaleX(0.8451);transform-origin:0 0;">XDG0006</div>
<div class="t" style="left:110.80px;top:948.94px;font-size:12px;line-height:12px;font-family:'Liberation Sans',sans-serif;color:#dcdcdc;transform:scaleX(0.9869);transform-origin:0 0;">Type reference cannot find type named &#x27;{clr-namespace:Microsoft.VisualStudio.XSurface.Wpf;assembly=WpfSurface}RadRibbonWindow&#x27;.</div>
<svg class="a" style="left:15.2px;top:965.5px" width="16" height="16"><circle cx="8" cy="8" r="6.6" fill="#f0525d"/><path d="M4.8 4.8 L11.2 11.2 M11.2 4.8 L4.8 11.2" stroke="#161616" stroke-width="1.3"/></svg><div class="t" style="left:40.00px;top:968.52px;font-size:12.5px;line-height:12.5px;font-family:'Liberation Sans',sans-serif;color:#58a6e4;transform:scaleX(0.8451);transform-origin:0 0;">XDG0006</div>
<div class="t" style="left:110.80px;top:968.94px;font-size:12px;line-height:12px;font-family:'Liberation Sans',sans-serif;color:#dcdcdc;transform:scaleX(0.9869);transform-origin:0 0;">The method or operation is not implemented.</div>
<svg class="a" style="left:15.2px;top:985.5px" width="16" height="16"><circle cx="8" cy="8" r="6.6" fill="#f0525d"/><path d="M4.8 4.8 L11.2 11.2 M11.2 4.8 L4.8 11.2" stroke="#161616" stroke-width="1.3"/></svg><div class="t" style="left:40.00px;top:988.52px;font-size:12.5px;line-height:12.5px;font-family:'Liberation Sans',sans-serif;color:#58a6e4;transform:scaleX(0.8451);transform-origin:0 0;">XDG0031</div>
<div class="t" style="left:110.80px;top:988.94px;font-size:12px;line-height:12px;font-family:'Liberation Sans',sans-serif;color:#dcdcdc;transform:scaleX(0.9869);transform-origin:0 0;">Specified value of type &#x27;System.Windows.Media.Imaging.BitmapImage&#x27; must have IsFrozen set to false to modify.</div>
<svg class="a" style="left:15.2px;top:1005.5px" width="16" height="16"><circle cx="8" cy="8" r="6.6" fill="#f0525d"/><path d="M4.8 4.8 L11.2 11.2 M11.2 4.8 L4.8 11.2" stroke="#161616" stroke-width="1.3"/></svg><div class="t" style="left:40.00px;top:1008.52px;font-size:12.5px;line-height:12.5px;font-family:'Liberation Sans',sans-serif;color:#58a6e4;transform:scaleX(0.8451);transform-origin:0 0;">XDG0010</div>
<div class="t" style="left:110.80px;top:1008.94px;font-size:12px;line-height:12px;font-family:'Liberation Sans',sans-serif;color:#dcdcdc;transform:scaleX(0.9869);transform-origin:0 0;">Object of type &#x27;System.Windows.StaticResourceExtension&#x27; cannot be converted to type &#x27;System.Windows.Style&#x27;.</div>
<svg class="a" style="left:15.2px;top:1025.5px" width="16" height="16"><circle cx="8" cy="8" r="6.6" fill="#f0525d"/><path d="M4.8 4.8 L11.2 11.2 M11.2 4.8 L4.8 11.2" stroke="#161616" stroke-width="1.3"/></svg><div class="t" style="left:40.00px;top:1028.52px;font-size:12.5px;line-height:12.5px;font-family:'Liberation Sans',sans-serif;color:#58a6e4;transform:scaleX(0.8451);transform-origin:0 0;">XDG0010</div>
<div class="t" style="left:110.80px;top:1028.94px;font-size:12px;line-height:12px;font-family:'Liberation Sans',sans-serif;color:#dcdcdc;transform:scaleX(0.9869);transform-origin:0 0;">Object of type &#x27;System.Windows.StaticResourceExtension&#x27; cannot be converted to type &#x27;System.Windows.Style&#x27;.</div>
<svg class="a" style="left:15.2px;top:1045.5px" width="16" height="16"><circle cx="8" cy="8" r="6.6" fill="#f0525d"/><path d="M4.8 4.8 L11.2 11.2 M11.2 4.8 L4.8 11.2" stroke="#161616" stroke-width="1.3"/></svg><div class="t" style="left:40.00px;top:1048.52px;font-size:12.5px;line-height:12.5px;font-family:'Liberation Sans',sans-serif;color:#58a6e4;transform:scaleX(0.8451);transform-origin:0 0;">XDG0010</div>
<div class="t" style="left:110.80px;top:1048.94px;font-size:12px;line-height:12px;font-family:'Liberation Sans',sans-serif;color:#dcdcdc;transform:scaleX(0.9869);transform-origin:0 0;">Object of type &#x27;System.Windows.StaticResourceExtension&#x27; cannot be converted to type &#x27;System.Windows.Style&#x27;.</div>
<svg class="a" style="left:15.2px;top:1065.5px" width="16" height="16"><circle cx="8" cy="8" r="6.6" fill="#f0525d"/><path d="M4.8 4.8 L11.2 11.2 M11.2 4.8 L4.8 11.2" stroke="#161616" stroke-width="1.3"/></svg><div class="t" style="left:40.00px;top:1068.52px;font-size:12.5px;line-height:12.5px;font-family:'Liberation Sans',sans-serif;color:#58a6e4;transform:scaleX(0.8451);transform-origin:0 0;">XDG0010</div>
<div class="t" style="left:110.80px;top:1068.94px;font-size:12px;line-height:12px;font-family:'Liberation Sans',sans-serif;color:#dcdcdc;transform:scaleX(0.9869);transform-origin:0 0;">Object of type &#x27;System.Windows.StaticResourceExtension&#x27; cannot be converted to type &#x27;System.Windows.Style&#x27;.</div>
<svg class="a" style="left:15.2px;top:1085.5px" width="16" height="16"><circle cx="8" cy="8" r="6.6" fill="#f0525d"/><path d="M4.8 4.8 L11.2 11.2 M11.2 4.8 L4.8 11.2" stroke="#161616" stroke-width="1.3"/></svg><div class="t" style="left:40.00px;top:1088.52px;font-size:12.5px;line-height:12.5px;font-family:'Liberation Sans',sans-serif;color:#58a6e4;transform:scaleX(0.8451);transform-origin:0 0;">XDG0010</div>
<div class="t" style="left:110.80px;top:1088.94px;font-size:12px;line-height:12px;font-family:'Liberation Sans',sans-serif;color:#dcdcdc;transform:scaleX(0.9869);transform-origin:0 0;">Object of type &#x27;System.Windows.StaticResourceExtension&#x27; cannot be converted to type &#x27;System.Windows.Style&#x27;.</div>
<svg class="a" style="left:15.2px;top:1105.5px" width="16" height="16"><circle cx="8" cy="8" r="6.6" fill="#f0525d"/><path d="M4.8 4.8 L11.2 11.2 M11.2 4.8 L4.8 11.2" stroke="#161616" stroke-width="1.3"/></svg><div class="t" style="left:40.00px;top:1108.52px;font-size:12.5px;line-height:12.5px;font-family:'Liberation Sans',sans-serif;color:#58a6e4;transform:scaleX(0.8451);transform-origin:0 0;">XDG0010</div>
<div class="t" style="left:110.80px;top:1108.94px;font-size:12px;line-height:12px;font-family:'Liberation Sans',sans-serif;color:#dcdcdc;transform:scaleX(0.9869);transform-origin:0 0;">Object of type &#x27;System.Windows.StaticResourceExtension&#x27; cannot be converted to type &#x27;System.Windows.Style&#x27;.</div>
<svg class="a" style="left:15.2px;top:1125.5px" width="16" height="16"><circle cx="8" cy="8" r="6.6" fill="#f0525d"/><path d="M4.8 4.8 L11.2 11.2 M11.2 4.8 L4.8 11.2" stroke="#161616" stroke-width="1.3"/></svg><div class="t" style="left:40.00px;top:1128.52px;font-size:12.5px;line-height:12.5px;font-family:'Liberation Sans',sans-serif;color:#58a6e4;transform:scaleX(0.8451);transform-origin:0 0;">XDG0010</div>
<div class="t" style="left:110.80px;top:1128.94px;font-size:12px;line-height:12px;font-family:'Liberation Sans',sans-serif;color:#dcdcdc;transform:scaleX(1.0270);transform-origin:0 0;">&#x27;{DependencyPropertyValue}&#x27; is not a valid value for the &#x27;System.Windows.Controls.Control.Template&#x27; property on a Setter.</div>
<div class="a" style="left:0;top:1133px;width:891px;height:13px;background:#1f1f1f"></div><div class="a" style="left:0;top:1133px;width:313px;height:1px;background:#3a3a3a"></div><div class="a" style="left:369px;top:1133px;width:522px;height:1px;background:#3a3a3a"></div><div class="a" style="left:312px;top:1132px;width:1px;height:14px;background:#3a3a3a"></div><div class="a" style="left:369px;top:1132px;width:1px;height:14px;background:#3a3a3a"></div><div class="t" style="left:-1.00px;top:1135.92px;font-size:12.5px;line-height:12.5px;font-family:'Liberation Sans',sans-serif;color:#cfcfcf;transform:scaleX(0.9018);transform-origin:0 0;">efactoring</div>
<div class="t" style="left:62.00px;top:1135.92px;font-size:12.5px;line-height:12.5px;font-family:'Liberation Sans',sans-serif;color:#cfcfcf;transform:scaleX(0.8857);transform-origin:0 0;">Test Explorer</div>
<div class="t" style="left:139.50px;top:1135.92px;font-size:12.5px;line-height:12.5px;font-family:'Liberation Sans',sans-serif;color:#cfcfcf;transform:scaleX(0.8995);transform-origin:0 0;">Find Results</div>
<div class="t" style="left:214.00px;top:1135.92px;font-size:12.5px;line-height:12.5px;font-family:'Liberation Sans',sans-serif;color:#cfcfcf;transform:scaleX(0.8966);transform-origin:0 0;">Unit Test Sessions</div>
<div class="t" style="left:318.50px;top:1135.92px;font-size:12.5px;line-height:12.5px;font-family:'Liberation Sans',sans-serif;color:#f0f0f0;transform:scaleX(0.8977);transform-origin:0 0;">Error List</div>
<div class="t" style="left:375.80px;top:1135.92px;font-size:12.5px;line-height:12.5px;font-family:'Liberation Sans',sans-serif;color:#cfcfcf;transform:scaleX(0.9158);transform-origin:0 0;">CodeLens</div>
<div class="t" style="left:440.00px;top:1135.92px;font-size:12.5px;line-height:12.5px;font-family:'Liberation Sans',sans-serif;color:#cfcfcf;transform:scaleX(1.0076);transform-origin:0 0;">Output</div>
<div class="a" style="left:207px;top:1133px;width:1px;height:13px;background:#333"></div>
</body></html>
